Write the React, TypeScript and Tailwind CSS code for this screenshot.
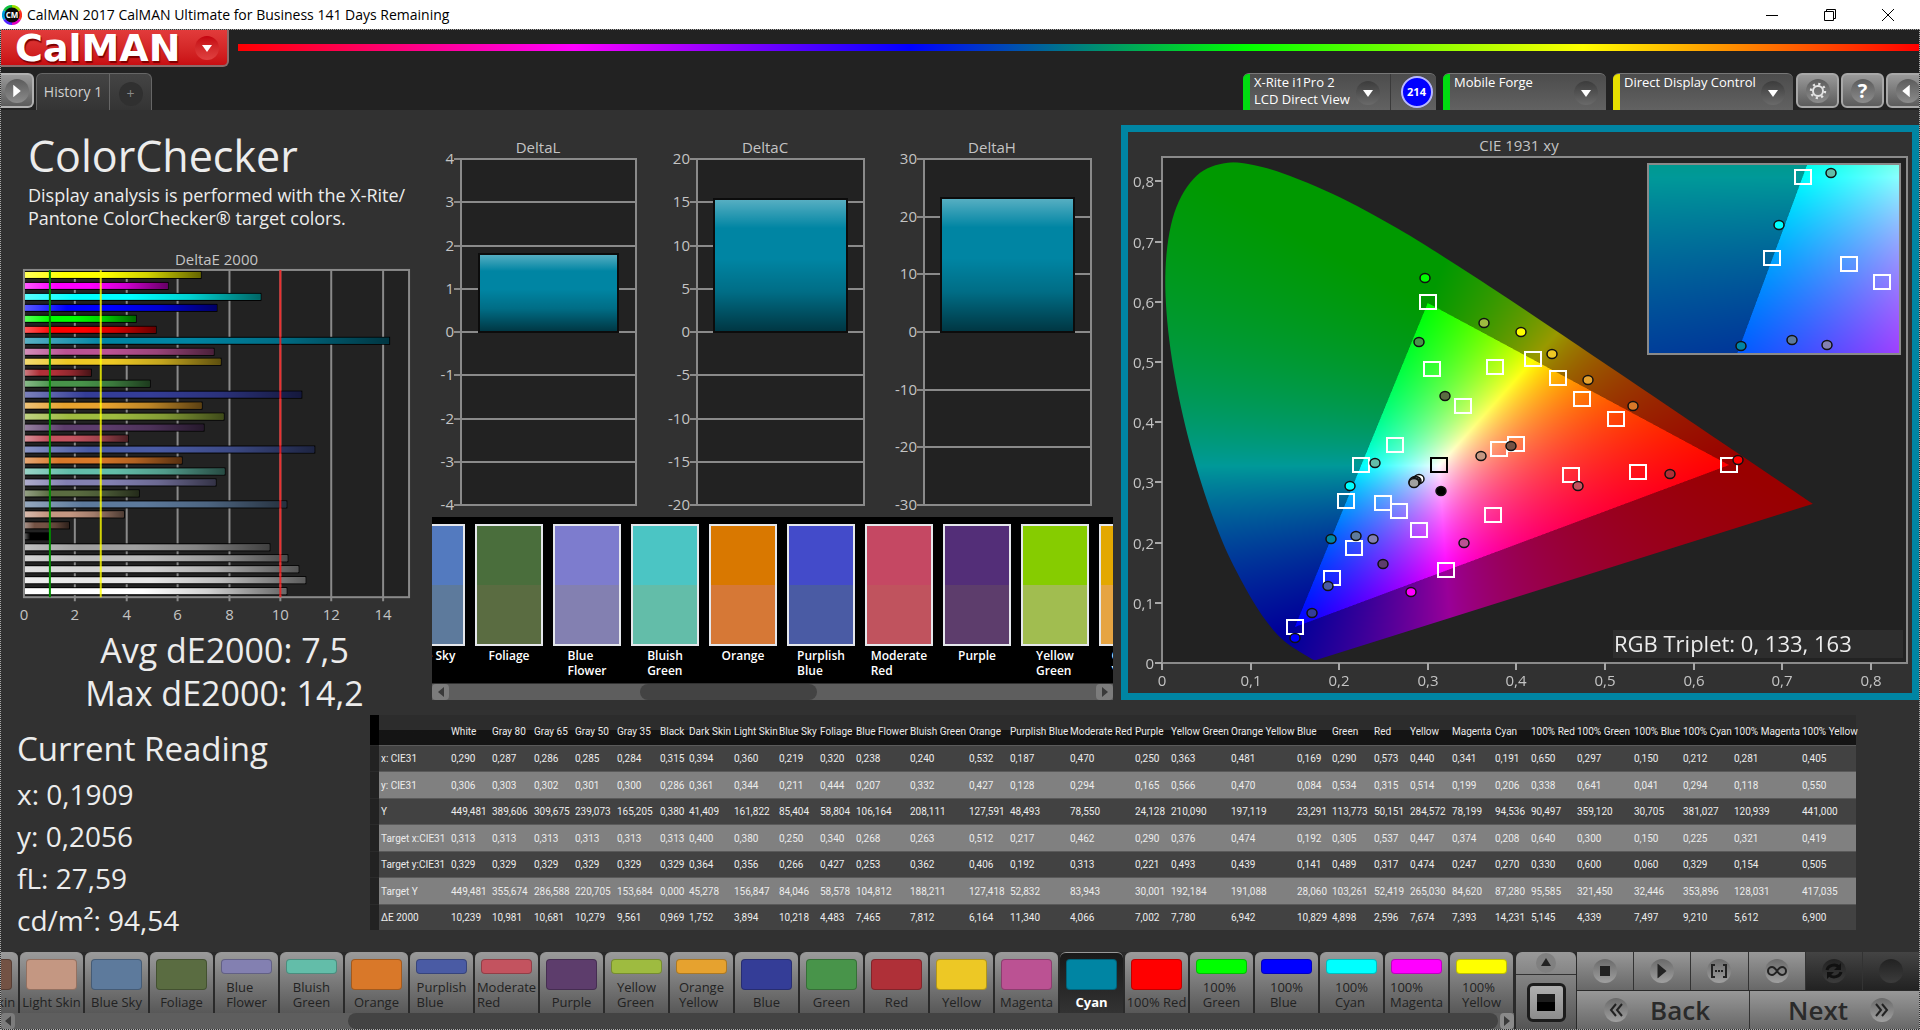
import { useEffect, useRef } from "react";
import type { ReactNode } from "react";
import clsx from "clsx";

interface Patch {
    name: string;
    color: string;
    // x, y, Y, target x, target y, target Y, dE2000
    values: string[];
    col: number;
}

const patches: Patch[] = [
    { name: "White", color: "#ffffff", col: 41, values: ["0,290", "0,306", "449,481", "0,313", "0,329", "449,481", "10,239"] },
    { name: "Gray 80", color: "#e6e6e6", col: 42, values: ["0,287", "0,303", "389,606", "0,313", "0,329", "355,674", "10,981"] },
    { name: "Gray 65", color: "#d2d2d2", col: 41, values: ["0,286", "0,302", "309,675", "0,313", "0,329", "286,588", "10,681"] },
    { name: "Gray 50", color: "#bcbcbc", col: 42, values: ["0,285", "0,301", "239,073", "0,313", "0,329", "220,705", "10,279"] },
    { name: "Gray 35", color: "#a0a0a0", col: 43, values: ["0,284", "0,300", "165,205", "0,313", "0,329", "153,684", "9,561"] },
    { name: "Black", color: "#000000", col: 29, values: ["0,315", "0,286", "0,380", "0,313", "0,329", "0,000", "0,969"] },
    { name: "Dark Skin", color: "#735244", col: 45, values: ["0,394", "0,361", "41,409", "0,400", "0,364", "45,278", "1,752"] },
    { name: "Light Skin", color: "#c49782", col: 45, values: ["0,360", "0,344", "161,822", "0,380", "0,356", "156,847", "3,894"] },
    { name: "Blue Sky", color: "#5d7a9c", col: 41, values: ["0,219", "0,211", "85,404", "0,250", "0,266", "84,046", "10,218"] },
    { name: "Foliage", color: "#5a6c41", col: 36, values: ["0,320", "0,444", "58,804", "0,340", "0,427", "58,578", "4,483"] },
    { name: "Blue Flower", color: "#8380b1", col: 54, values: ["0,238", "0,207", "106,164", "0,268", "0,253", "104,812", "7,465"] },
    { name: "Bluish Green", color: "#63bda9", col: 59, values: ["0,240", "0,332", "208,111", "0,263", "0,362", "188,211", "7,812"] },
    { name: "Orange", color: "#d97829", col: 41, values: ["0,532", "0,427", "127,591", "0,512", "0,406", "127,418", "6,164"] },
    { name: "Purplish Blue", color: "#4a5ba4", col: 60, values: ["0,187", "0,128", "48,493", "0,217", "0,192", "52,832", "11,340"] },
    { name: "Moderate Red", color: "#c3535f", col: 65, values: ["0,470", "0,294", "78,550", "0,462", "0,313", "83,943", "4,066"] },
    { name: "Purple", color: "#5d3d6c", col: 36, values: ["0,250", "0,165", "24,128", "0,290", "0,221", "30,001", "7,002"] },
    { name: "Yellow Green", color: "#9ebb40", col: 60, values: ["0,363", "0,566", "210,090", "0,376", "0,493", "192,184", "7,780"] },
    { name: "Orange Yellow", color: "#e6a22f", col: 66, values: ["0,481", "0,470", "197,119", "0,474", "0,439", "191,088", "6,942"] },
    { name: "Blue", color: "#343d97", col: 35, values: ["0,169", "0,084", "23,291", "0,192", "0,141", "28,060", "10,829"] },
    { name: "Green", color: "#48944a", col: 42, values: ["0,290", "0,534", "113,773", "0,305", "0,489", "103,261", "4,898"] },
    { name: "Red", color: "#af3038", col: 36, values: ["0,573", "0,315", "50,151", "0,537", "0,317", "52,419", "2,596"] },
    { name: "Yellow", color: "#edc825", col: 42, values: ["0,440", "0,514", "284,572", "0,447", "0,474", "265,030", "7,674"] },
    { name: "Magenta", color: "#bb5293", col: 43, values: ["0,341", "0,199", "78,199", "0,374", "0,247", "84,620", "7,393"] },
    { name: "Cyan", color: "#0085a3", col: 36, values: ["0,191", "0,206", "94,536", "0,208", "0,270", "87,280", "14,231"] },
    { name: "100% Red", color: "#ff0000", col: 46, values: ["0,650", "0,338", "90,497", "0,640", "0,330", "95,585", "5,145"] },
    { name: "100% Green", color: "#00ff00", col: 57, values: ["0,297", "0,641", "359,120", "0,300", "0,600", "321,450", "4,339"] },
    { name: "100% Blue", color: "#0000ff", col: 49, values: ["0,150", "0,041", "30,705", "0,150", "0,060", "32,446", "7,497"] },
    { name: "100% Cyan", color: "#00ffff", col: 51, values: ["0,212", "0,294", "381,027", "0,225", "0,329", "353,896", "9,210"] },
    { name: "100% Magenta", color: "#ff00ff", col: 68, values: ["0,281", "0,118", "120,939", "0,321", "0,154", "128,031", "5,612"] },
    { name: "100% Yellow", color: "#ffff00", col: 56, values: ["0,405", "0,550", "441,000", "0,419", "0,505", "417,035", "6,900"] },
];

const rowLabels = ["x: CIE31", "y: CIE31", "Y", "Target x:CIE31", "Target y:CIE31", "Target Y", "ΔE 2000"];

const swatches = [
    { name: "Blue Sky", top: "#537abf", bottom: "#5d7a9c", wrap: false },
    { name: "Foliage", top: "#4a6e3c", bottom: "#5a6c41", wrap: false },
    { name: "Blue Flower", top: "#7d7cce", bottom: "#8380b1", wrap: true },
    { name: "Bluish Green", top: "#4bc5c4", bottom: "#63bda9", wrap: true },
    { name: "Orange", top: "#d97800", bottom: "#d67836", wrap: false },
    { name: "Purplish Blue", top: "#434bca", bottom: "#4a5ba4", wrap: true },
    { name: "Moderate Red", top: "#c54863", bottom: "#c0535e", wrap: true },
    { name: "Purple", top: "#532e78", bottom: "#5d3d6c", wrap: false },
    { name: "Yellow Green", top: "#86cc00", bottom: "#a1bd50", wrap: true },
    { name: "Orange Yellow", top: "#e3a800", bottom: "#e6a442", wrap: true },
];

const wrapped = [
    "Blue Flower", "Bluish Green", "Purplish Blue", "Moderate Red", "Yellow Green", "Orange Yellow",
    "100% Green", "100% Blue", "100% Cyan", "100% Magenta", "100% Yellow",
];

const toNumber = (s: string) => parseFloat(s.replace(",", "."));

// Spectral locus, 380nm to 700nm
const locus = [
    [0.1741, 0.005], [0.1714, 0.0051], [0.1689, 0.0069], [0.1644, 0.0109], [0.1566, 0.0177],
    [0.144, 0.0297], [0.1355, 0.0399], [0.1241, 0.0578], [0.1096, 0.0868], [0.0913, 0.1327],
    [0.0687, 0.2007], [0.0454, 0.295], [0.0235, 0.4127], [0.0082, 0.5384], [0.0039, 0.6548],
    [0.0139, 0.7502], [0.0389, 0.812], [0.0743, 0.8338], [0.1142, 0.8262], [0.1547, 0.8059],
    [0.1929, 0.7816], [0.2296, 0.7543], [0.2658, 0.7243], [0.3016, 0.6923], [0.3731, 0.6245],
    [0.4441, 0.5547], [0.5125, 0.4866], [0.5752, 0.4242], [0.627, 0.3725], [0.6658, 0.334],
    [0.6915, 0.3083], [0.719, 0.2809], [0.7347, 0.2653],
];

interface View {
    x0: number;
    x1: number;
    y0: number;
    y1: number;
}

const mainView: View = { x0: 0, x1: 0.841, y0: 0, y1: 0.8417 };
const zoomView: View = { x0: 0.1405, x1: 0.2778, y0: 0.2005, y1: 0.3385 };

function GamutField({ view, width, height }: { view: View; width: number; height: number }) {
    const ref = useRef<HTMLCanvasElement>(null);

    useEffect(() => {
        const canvas = ref.current;
        const ctx = canvas?.getContext("2d");
        if (!canvas || !ctx) return;

        const w = canvas.width;
        const h = canvas.height;
        const image = ctx.createImageData(w, h);
        for (let j = 0; j < h; j++) {
            const y = view.y1 - ((j + 0.5) / h) * (view.y1 - view.y0);
            for (let i = 0; i < w; i++) {
                const x = view.x0 + ((i + 0.5) / w) * (view.x1 - view.x0);
                const X = x / y;
                const Z = (1 - x - y) / y;
                const rgb = [
                    3.2406 * X - 1.5372 - 0.4986 * Z,
                    -0.9689 * X + 1.8758 + 0.0415 * Z,
                    0.0557 * X - 0.204 + 1.057 * Z,
                ];
                // Outside the Rec.709 triangle the colors are dimmed
                const level = Math.min(...rgb) < 0 ? 153 : 255;
                const max = Math.max(...rgb);
                const at = (j * w + i) * 4;
                for (let k = 0; k < 3; k++) {
                    image.data[at + k] = (Math.max(0, rgb[k]) / max) * level;
                }
                image.data[at + 3] = 255;
            }
        }
        ctx.putImageData(image, 0, 0);

        const pts = locus.map(([x, y]) => [
            ((x - view.x0) / (view.x1 - view.x0)) * w,
            ((view.y1 - y) / (view.y1 - view.y0)) * h,
        ]);
        ctx.globalCompositeOperation = "destination-in";
        ctx.beginPath();
        ctx.moveTo(pts[0][0], pts[0][1]);
        for (let i = 0; i < pts.length - 1; i++) {
            const a = pts[Math.max(0, i - 1)];
            const b = pts[i];
            const c = pts[i + 1];
            const d = pts[Math.min(pts.length - 1, i + 2)];
            ctx.bezierCurveTo(
                b[0] + (c[0] - a[0]) / 6, b[1] + (c[1] - a[1]) / 6,
                c[0] - (d[0] - b[0]) / 6, c[1] - (d[1] - b[1]) / 6,
                c[0], c[1],
            );
        }
        ctx.closePath();
        ctx.fill();
    }, [view]);

    return <canvas ref={ref} width={width * 2} height={height * 2} className="block h-full w-full" />;
}

function Markers({ view, left, top, width, height }: { view: View; left: number; top: number; width: number; height: number }) {
    const px = (x: number) => Math.round(left + ((x - view.x0) / (view.x1 - view.x0)) * width);
    const py = (y: number) => Math.round(top + ((view.y1 - y) / (view.y1 - view.y0)) * height);
    const inside = (x: number, y: number) => x > view.x0 && x < view.x1 - 0.004 && y > view.y0 && y < view.y1;
    const targets = patches.filter((p) => inside(toNumber(p.values[3]), toNumber(p.values[4])));
    const measured = patches.filter((p) => inside(toNumber(p.values[0]), toNumber(p.values[1])));

    return (
        <g>
            {targets.map((p, i) => (
                <rect
                    key={p.name}
                    x={px(toNumber(p.values[3])) - 8}
                    y={py(toNumber(p.values[4])) - 7}
                    width="16"
                    height="14"
                    fill="none"
                    stroke={view === mainView && i < 6 ? "#000" : "#fff"}
                    strokeWidth="2"
                />
            ))}
            {measured.map((p) => (
                <ellipse
                    key={p.name}
                    cx={px(toNumber(p.values[0]))}
                    cy={py(toNumber(p.values[1]))}
                    rx="5"
                    ry="4.5"
                    fill={p.color}
                    stroke="#111"
                    strokeWidth="1.5"
                />
            ))}
        </g>
    );
}

function CieChart() {
    const ticks = [0, 1, 2, 3, 4, 5, 6, 7, 8];
    const label = (t: number) => (t === 0 ? "0" : `0,${t}`);

    return (
        <svg viewBox="0 0 784 561" className="block w-full" fontSize="15" fill="#c4c4c4">
            <text x="391" y="19" textAnchor="middle">CIE 1931 xy</text>
            <rect x="34" y="25" width="745" height="506" fill="#222222" stroke="#8a8a8a" strokeWidth="2" />
            <foreignObject x="34" y="26" width="745" height="505">
                <GamutField view={mainView} width={745} height={505} />
            </foreignObject>
            {ticks.map((t) => (
                <g key={t}>
                    <path d={`M${Math.round(34 + t * 88.6)} 531v7M27 ${Math.round(531 - t * 60.2)}h7`} stroke="#a8a8a8" strokeWidth="2" />
                    <text x={Math.round(34 + t * 88.6)} y="554" textAnchor="middle">{label(t)}</text>
                    <text x="26" y={Math.round(537 - t * 60.2)} textAnchor="end">{label(t)}</text>
                </g>
            ))}
            <Markers view={mainView} left={34} top={25} width={745} height={506} />

            {/* Zoomed view around the selected patch */}
            <foreignObject x="520" y="32" width="252" height="190">
                <GamutField view={zoomView} width={252} height={190} />
            </foreignObject>
            <rect x="520" y="32" width="252" height="190" fill="none" stroke="#8a8a8a" strokeWidth="2" />
            <Markers view={zoomView} left={520} top={32} width={252} height={190} />

            <rect x="485" y="498" width="290" height="28" fill="#2d2d2d" />
            <text x="486" y="520" fontSize="22" fill="#ececec">RGB Triplet: 0, 133, 163</text>
        </svg>
    );
}

function GlossStops() {
    return (
        <>
            <stop offset="0" stopColor="#fff" stopOpacity="0.35" />
            <stop offset="0.22" stopColor="#fff" stopOpacity="0" />
            <stop offset="0.45" stopColor="#000" stopOpacity="0" />
            <stop offset="0.7" stopColor="#000" stopOpacity="0.18" />
            <stop offset="1" stopColor="#000" stopOpacity="0.6" />
        </>
    );
}

function DeltaEChart() {
    const unit = 25.7;
    const bars = [...patches].reverse();

    return (
        <svg viewBox="1 0 432 376" className="block w-full" fontSize="15" fill="#c4c4c4">
            <defs>
                <linearGradient id="gloss-x" x1="0" y1="0" x2="1" y2="0">
                    <GlossStops />
                </linearGradient>
            </defs>
            <text x="217" y="15" textAnchor="middle">DeltaE 2000</text>
            <rect x="24" y="20" width="386" height="328" fill="#222222" />
            {[2, 4, 6, 8, 10, 12, 14].map((t) => (
                <path key={t} d={`M${Math.round(24 + t * unit)} 20v332`} stroke="#8a8a8a" strokeWidth="2" />
            ))}
            <rect x="24" y="20" width="386" height="328" fill="none" stroke="#8a8a8a" strokeWidth="2" />
            {bars.map((p, i) => {
                const y = Math.round(21 + i * 10.93);
                const w = Math.round(toNumber(p.values[6]) * unit);
                return (
                    <g key={p.name}>
                        <rect x="25" y={y} width={w} height="8" fill="#000" />
                        <rect x="25" y={y + 1} width={w - 1} height="6" fill={p.color} />
                        <rect x="25" y={y + 1} width={w - 1} height="6" fill="url(#gloss-x)" />
                    </g>
                );
            })}
            <path d="M50 20v328" stroke="#008a00" strokeWidth="2" />
            <path d="M101 20v328" stroke="#ffff00" strokeOpacity="0.8" strokeWidth="2" />
            <path d="M281 20v328" stroke="#ff1a1a" strokeOpacity="0.8" strokeWidth="2" />
            {[0, 2, 4, 6, 8, 10, 12, 14].map((t) => (
                <text key={t} x={Math.round(24 + t * unit)} y="371" textAnchor="middle">{t}</text>
            ))}
        </svg>
    );
}

interface DeltaProps {
    title: string;
    value: number;
    limit: number;
    step: number;
    left: number;
    right: number;
}

function DeltaChart({ title, value, limit, step, left, right }: DeltaProps) {
    const ticks: number[] = [];
    for (let t = -limit; t <= limit; t += step) ticks.push(t);
    const y = (t: number) => Math.round(194 - (t / limit) * 173);
    const inset = Math.round((right - left) / 10);

    return (
        <svg viewBox="0 0 227 379" className="block min-w-0 flex-1" fontSize="15" fill="#c4c4c4">
            <defs>
                <linearGradient id={`gloss-${title}`} x1="0" y1="0" x2="0" y2="1">
                    <GlossStops />
                </linearGradient>
            </defs>
            <text x="106" y="15" textAnchor="middle">{title}</text>
            <rect x={left} y="21" width={right - left} height="346" fill="#222222" />
            {ticks.map((t) => (
                <g key={t}>
                    <path d={`M${left - 7} ${y(t)}H${right}`} stroke="#8a8a8a" strokeWidth="2" />
                    <text x={left - 7} y={y(t) + 5} textAnchor="end">{t}</text>
                </g>
            ))}
            <rect x={left} y="21" width={right - left} height="346" fill="none" stroke="#8a8a8a" strokeWidth="2" />
            <rect
                x={left + inset}
                y={y(value)}
                width={right - left - 2 * inset}
                height={194 - y(value)}
                fill="#0085a3"
            />
            <rect
                x={left + inset}
                y={y(value)}
                width={right - left - 2 * inset}
                height={194 - y(value)}
                fill={`url(#gloss-${title})`}
                stroke="#0c0c0c"
                strokeWidth="2"
            />
        </svg>
    );
}

function Triangle({ className, dir }: { className?: string; dir: "up" | "down" | "left" | "right" }) {
    const d = { up: "M0 8L5 0l5 8z", down: "M0 2h10L5 9z", left: "M8 0v10L2 5z", right: "M2 0v10l6-5z" }[dir];
    return (
        <svg viewBox="0 0 10 10" className={clsx("h-[10px] w-[10px] fill-current", className)}>
            <path d={d} />
        </svg>
    );
}

function SwatchStrip() {
    return (
        <div className="mr-2">
            <div className="flex h-[166px] gap-[10px] overflow-hidden bg-black pt-[7px]">
                {swatches.map((s) => (
                    <div key={s.name} className="w-[68px] shrink-0 first:-ml-[35px]">
                        <div className="flex h-[122px] flex-col border-2 border-gray-200">
                            <div className="flex-1" style={{ backgroundColor: s.top }} />
                            <div className="flex-1" style={{ backgroundColor: s.bottom }} />
                        </div>
                        <p className={clsx("mx-auto mt-[2px] text-xs leading-[15px] font-semibold text-white", s.wrap ? "w-min" : "w-max")}>
                            {s.name}
                        </p>
                    </div>
                ))}
            </div>
            <div className="mt-px flex h-4 items-stretch justify-between bg-[#5e5e5e]">
                <button aria-label="Scroll left" className="flex w-[17px] items-center justify-center rounded bg-[#7c7c7c] text-[#3a3a3a]">
                    <Triangle dir="left" />
                </button>
                <div className="flex flex-1 pl-[28%] pr-[41%]">
                    <div className="flex-1 rounded-lg bg-[#434343]" />
                </div>
                <button aria-label="Scroll right" className="flex w-[17px] items-center justify-center rounded bg-[#7c7c7c] text-[#3a3a3a]">
                    <Triangle dir="right" />
                </button>
            </div>
        </div>
    );
}

function ResultsTable() {
    return (
        <table className="h-[215px] w-full table-fixed border-collapse text-left font-[Roboto,sans-serif] text-[10px] leading-4 whitespace-nowrap text-[#ececec]">
            <colgroup>
                <col className="w-[9px]" />
                <col className="w-[70px]" />
                {patches.map((p) => (
                    <col key={p.name} style={{ width: p.col }} />
                ))}
            </colgroup>
            <thead>
                <tr className="h-[30px] bg-linear-to-b from-[#2c2c2c] from-50% to-[#141414] to-50%">
                    <td className="bg-black" />
                    <td />
                    {patches.map((p) => (
                        <th key={p.name} scope="col" className="p-0 pt-1 pl-[2px] font-normal">{p.name}</th>
                    ))}
                </tr>
            </thead>
            <tbody>
                {rowLabels.map((label, r) => (
                    <tr key={label} className="border-t border-[#5a5a5a] odd:bg-[#424242] even:bg-[#808080]">
                        <td className="border-t border-[#2a2a2a] bg-[#222222]" />
                        <th scope="row" className="p-0 pt-[2px] pl-[2px] font-normal">{label}</th>
                        {patches.map((p) => (
                            <td key={p.name} className="p-0 pt-[2px] pl-[2px]">{p.values[r]}</td>
                        ))}
                    </tr>
                ))}
            </tbody>
        </table>
    );
}

function SourceBox({ lines, strip, className, children }: { lines: string[]; strip: string; className: string; children?: ReactNode }) {
    return (
        <div className={clsx("flex h-[37px] overflow-hidden rounded-t-md border-t border-[#777] bg-linear-to-b from-[#4c4c4c] to-[#626262]", className)}>
            <div className={clsx("w-[7px]", strip)} />
            <button className="flex flex-1 justify-between pr-2 pl-1 text-left text-[13px] leading-[17px] whitespace-nowrap text-white">
                <span>
                    {lines.map((l) => (
                        <span key={l} className="block">{l}</span>
                    ))}
                </span>
                <span className="mt-[7px] flex h-6 w-6 items-center justify-center rounded-full bg-linear-to-b from-[#3c3c3c] to-[#6a6a6a]">
                    <Triangle dir="down" />
                </span>
            </button>
            {children}
        </div>
    );
}

function ToolButton({ label, children }: { label: string; children: ReactNode }) {
    return (
        <button
            aria-label={label}
            className="flex h-[35px] w-[43px] items-center justify-center rounded-md border-2 border-[#a8a8a8] bg-linear-to-b from-[#9a9a9a] to-[#5c5c5c] text-white"
        >
            <span className="flex h-6 w-6 items-center justify-center rounded-full bg-linear-to-b from-[#5c5c5c] to-[#8c8c8c]">
                {children}
            </span>
        </button>
    );
}

function Header() {
    return (
        <header className="bg-[#222222]">
            <div className="flex items-start">
                <button className="flex h-[37px] w-[228px] items-center justify-between rounded-br-md border-r-2 border-b-2 border-[#8d6a6a] bg-linear-to-b from-[#e23b3b] to-[#c90d12] pr-2 pl-[14px] text-white">
                    <span className="font-['DejaVu_Sans',sans-serif] text-[38px] leading-[34px] font-bold [text-shadow:1px_2px_1px_#7a0000]">CalMAN</span>
                    <span className="flex h-6 w-6 items-center justify-center rounded-full bg-linear-to-b from-[#c4000e] to-[#e04040]">
                        <Triangle dir="down" />
                    </span>
                </button>
                <div className="mt-[14px] ml-[9px] h-[7px] flex-1 bg-[linear-gradient(to_right,#f00,#f0f,#00f,#0f0,#ff0,#f00)]" />
            </div>
            <div className="mt-[6px] flex items-start justify-between">
                <div className="flex items-start">
                    <button aria-label="Show panel" className="flex h-[35px] w-[33px] items-center justify-center rounded-r-md border-2 border-l-0 border-[#b0b0b0] bg-linear-to-b from-[#9a9a9a] to-[#5c5c5c] text-white">
                        <span className="flex h-6 w-6 items-center justify-center rounded-full bg-linear-to-b from-[#5c5c5c] to-[#8c8c8c]">
                            <Triangle dir="right" className="scale-125" />
                        </span>
                    </button>
                    <nav className="ml-[2px] flex h-[37px] rounded-t-md border border-b-0 border-[#666] bg-linear-to-b from-[#444] to-[#343434] text-sm text-[#d0d0d0]">
                        <button className="w-[73px] border-r border-[#666]">History 1</button>
                        <button aria-label="Add tab" className="flex w-[41px] items-center justify-center">
                            <span className="mt-1 flex h-6 w-6 items-center justify-center rounded-full bg-[#303030] text-[#888]">+</span>
                        </button>
                    </nav>
                </div>
                <div className="flex items-start overflow-hidden">
                    <SourceBox lines={["X-Rite i1Pro 2", "LCD Direct View"]} strip="bg-[#00dd10]" className="w-[193px]">
                        <div className="ml-[2px] flex w-[44px] items-center justify-center border-l border-[#3a3a3a] pl-2">
                            <span className="flex h-8 w-8 shrink-0 items-center justify-center rounded-full border-2 border-[#b8b8ff] bg-[#0000ff] text-[11px] font-bold text-white">214</span>
                        </div>
                        <div className="w-[2px]" />
                    </SourceBox>
                    <SourceBox lines={["Mobile Forge"]} strip="bg-[#00dd10]" className="ml-[7px] w-[163px]" />
                    <SourceBox lines={["Direct Display Control"]} strip="bg-[#e8e000]" className="mr-[3px] ml-[7px] w-[180px]" />
                    <div className="-mr-[10px] flex gap-[2px]">
                        <ToolButton label="Settings">
                            <svg viewBox="0 0 20 20" className="h-5 w-5" fill="none" stroke="#e4e4e4">
                                <circle cx="10" cy="10" r="5" strokeWidth="2" />
                                <circle cx="10" cy="10" r="7" strokeWidth="2.4" strokeDasharray="2.2 3.3" />
                            </svg>
                        </ToolButton>
                        <ToolButton label="Help">
                            <span className="text-xl font-bold">?</span>
                        </ToolButton>
                        <ToolButton label="Hide panel">
                            <Triangle dir="left" className="mr-1 scale-125" />
                        </ToolButton>
                    </div>
                </div>
            </div>
        </header>
    );
}

function PatchButton({ patch }: { patch: Patch }) {
    const two = wrapped.includes(patch.name);
    const active = patch.name === "Cyan";
    return (
        <button
            className={clsx(
                "flex h-[61px] w-[63px] shrink-0 flex-col items-center rounded-t-md border-t border-[#999] bg-linear-to-b pt-[6px] text-[13px] leading-[15px]",
                active ? "from-[#191919] to-[#333] font-bold text-white" : "from-[#9a9a9a] to-[#585858] text-[#222]",
            )}
        >
            <span
                className={clsx("w-[51px] rounded border border-black/25", two ? "h-[15px]" : "h-[31px]")}
                style={{ backgroundColor: patch.color }}
            />
            <span className={clsx("mt-auto mb-[3px] text-left", two ? "w-min" : "w-max")}>{patch.name}</span>
        </button>
    );
}

function RoundIcon({ dim, children }: { dim?: boolean; children?: ReactNode }) {
    return (
        <span
            className={clsx(
                "flex h-6 w-6 items-center justify-center rounded-full bg-linear-to-b",
                dim ? "from-[#222] to-[#3c3c3c]" : "from-[#6a6a6a] to-[#a0a0a0]",
            )}
        >
            {children}
        </span>
    );
}

function TransportButton({ label, dim, children }: { label: string; dim?: boolean; children?: ReactNode }) {
    return (
        <button
            aria-label={label}
            className={clsx(
                "flex flex-1 items-center justify-center border-r border-[#333] bg-linear-to-b text-[#222] last:border-r-0",
                dim ? "from-[#444] to-[#222]" : "from-[#989898] to-[#686868]",
            )}
        >
            <RoundIcon dim={dim}>{children}</RoundIcon>
        </button>
    );
}

function Chevrons({ flip }: { flip?: boolean }) {
    return (
        <svg viewBox="0 0 16 16" className={clsx("h-4 w-4", flip && "rotate-180")} fill="none" stroke="#222" strokeWidth="2">
            <path d="M8 2L3 8l5 6M14 2L9 8l5 6" />
        </svg>
    );
}

function Footer() {
    return (
        <footer className="flex h-[77px] bg-[#2a2a2a]">
            <div className="flex min-w-0 flex-1 flex-col">
                <div className="flex justify-end gap-[2px] overflow-hidden pr-px">
                    {patches.slice(6).map((p) => (
                        <PatchButton key={p.name} patch={p} />
                    ))}
                </div>
                <div className="flex flex-1 bg-[#5e5e5e]">
                    <button aria-label="Scroll left" className="flex w-[14px] items-center justify-center rounded bg-[#7c7c7c] text-[#3a3a3a]">
                        <Triangle dir="left" />
                    </button>
                    <div className="flex flex-1 pr-[2px] pl-[22%]">
                        <div className="flex-1 rounded-lg bg-[#434343]" />
                    </div>
                    <button aria-label="Scroll right" className="flex w-[14px] items-center justify-center rounded bg-[#8a8a8a] text-[#3a3a3a]">
                        <Triangle dir="right" />
                    </button>
                </div>
            </div>
            <div className="ml-[2px] flex w-[60px] flex-col rounded-t-md bg-linear-to-b from-[#999] to-[#555]">
                <button aria-label="Expand" className="flex h-[23px] items-center justify-center border-b border-[#333] text-[#222]">
                    <span className="flex h-5 w-5 items-center justify-center rounded-full bg-[#808080]">
                        <Triangle dir="up" />
                    </span>
                </button>
                <div className="flex flex-1 items-center justify-center">
                    <button aria-label="Pattern window" className="flex h-[39px] w-[39px] items-center justify-center rounded-md border-3 border-[#1c1c1c] bg-linear-to-b from-[#b0b0b0] to-[#8c8c8c]">
                        <span className="h-[17px] w-[18px] bg-linear-to-b from-[#1c1c1c] from-50% to-black to-50%" />
                    </button>
                </div>
            </div>
            <div className="ml-px flex w-[342px] flex-col gap-px">
                <div className="flex h-[38px]">
                    <TransportButton label="Stop">
                        <span className="h-[10px] w-[10px] bg-[#222]" />
                    </TransportButton>
                    <TransportButton label="Play">
                        <Triangle dir="right" className="scale-150" />
                    </TransportButton>
                    <TransportButton label="Read series">
                        <svg viewBox="0 0 18 16" className="h-4 w-[18px]" fill="none" stroke="#222" strokeWidth="2">
                            <path d="M5 2H2v12h3M13 2h3v12h-3" />
                            <path d="M5 8h8" strokeDasharray="2 1" />
                        </svg>
                    </TransportButton>
                    <TransportButton label="Read continuously">
                        <svg viewBox="0 0 20 12" className="h-3 w-5" fill="none" stroke="#222" strokeWidth="2">
                            <path d="M10 6C8 3 7 2 5 2a4 4 0 0 0 0 8c2 0 3-1 5-4s3-4 5-4a4 4 0 0 1 0 8c-2 0-3-1-5-4z" />
                        </svg>
                    </TransportButton>
                    <TransportButton label="Refresh" dim>
                        <svg viewBox="0 0 20 20" className="h-5 w-5" fill="none" stroke="#111" strokeWidth="3">
                            <path d="M3 9a7 6 0 0 1 12-3M17 11a7 6 0 0 1-12 3" />
                            <path d="M17 2v7h-7zM3 18v-7h7z" fill="#111" stroke="none" />
                        </svg>
                    </TransportButton>
                    <TransportButton label="Record" dim />
                </div>
                <div className="flex flex-1 text-[26px] leading-[30px] font-semibold text-[#2a2a2a]">
                    <button className="flex flex-1 items-center gap-[22px] border-r border-[#333] bg-linear-to-b from-[#989898] to-[#686868] pl-[27px]">
                        <RoundIcon><Chevrons /></RoundIcon>
                        Back
                    </button>
                    <button className="flex flex-1 items-center justify-end gap-[22px] bg-linear-to-b from-[#989898] to-[#686868] pr-[25px]">
                        Next
                        <RoundIcon><Chevrons flip /></RoundIcon>
                    </button>
                </div>
            </div>
        </footer>
    );
}

function TitleBar() {
    return (
        <div className="flex h-[29px] items-center bg-white pr-[3px] pl-[2px] text-black">
            <svg viewBox="0 0 20 20" className="h-5 w-5">
                <path d="M10 0a10 10 0 0 1 8.7 5L10 10z" fill="#9be000" />
                <path d="M18.7 5a10 10 0 0 1 0 10L10 10z" fill="#ff3020" />
                <path d="M18.7 15A10 10 0 0 1 10 20V10z" fill="#e000c0" />
                <path d="M10 20a10 10 0 0 1-8.7-5L10 10z" fill="#5020ff" />
                <path d="M1.3 15a10 10 0 0 1 0-10L10 10z" fill="#00a0e0" />
                <path d="M1.3 5A10 10 0 0 1 10 0v10z" fill="#10c040" />
                <circle cx="10" cy="10" r="7.5" fill="#0a0a0a" />
                <text x="10" y="13" textAnchor="middle" fontSize="8" fontWeight="700" fill="#fff">CM</text>
            </svg>
            <h1 className="ml-[5px] flex-1 text-sm">CalMAN 2017 CalMAN Ultimate for Business 141 Days Remaining</h1>
            <button aria-label="Minimize" className="flex w-[58px] justify-center">
                <svg viewBox="0 0 12 12" className="h-3 w-3" stroke="#000"><path d="M0 6.5h12" /></svg>
            </button>
            <button aria-label="Restore" className="flex w-[58px] justify-center">
                <svg viewBox="0 0 12 12" className="h-3 w-3" fill="none" stroke="#000"><path d="M.5 2.5h9v9h-9zM2.5 2.5v-2h9v9h-2" /></svg>
            </button>
            <button aria-label="Close" className="flex w-[58px] justify-center">
                <svg viewBox="0 0 12 12" className="h-3 w-3" stroke="#000"><path d="M0 0l12 12M12 0L0 12" /></svg>
            </button>
        </div>
    );
}

export default function App() {
    return (
        <div className="flex min-h-screen flex-col bg-[#313131] font-['Open_Sans','Noto_Sans',sans-serif] text-[#ececec]">
            <TitleBar />
            <div className="flex flex-1 flex-col border border-dotted border-[#aaaaaa]">
                <Header />
                <main className="flex-1">
                    <div className="grid grid-cols-[minmax(0,431fr)_minmax(0,689fr)_minmax(0,798fr)]">
                        <section>
                            <h2 className="mt-[18px] ml-[27px] text-[43px] leading-[56px]">ColorChecker</h2>
                            <p className="ml-[27px] text-[18px] leading-[23px] whitespace-nowrap">
                                Display analysis is performed with the X-Rite/
                                <br />
                                Pantone ColorChecker® target colors.
                            </p>
                            <div className="mt-5">
                                <DeltaEChart />
                            </div>
                            <div className="mt-1 pl-4 text-center text-[34px] leading-[43px]">
                                <p>Avg dE2000: 7,5</p>
                                <p>Max dE2000: 14,2</p>
                            </div>
                        </section>
                        <section className="pt-7">
                            <div className="mr-2 flex">
                                <DeltaChart title="DeltaL" value={1.8} limit={4} step={1} left={29} right={204} />
                                <DeltaChart title="DeltaC" value={15.4} limit={20} step={5} left={38} right={205} />
                                <DeltaChart title="DeltaH" value={23.3} limit={30} step={10} left={38} right={205} />
                            </div>
                            <SwatchStrip />
                        </section>
                        <section className="pt-[15px]">
                            <div className="border-7 border-[#0085a3]">
                                <CieChart />
                            </div>
                        </section>
                    </div>
                    <div className="flex items-start">
                        <section className="w-[369px] shrink-0 pl-4">
                            <h2 className="mt-3 text-[33px] leading-[44px]">Current Reading</h2>
                            <div className="mt-[2px] text-[28px] leading-[42px]">
                                <p>x: 0,1909</p>
                                <p>y: 0,2056</p>
                                <p>fL: 27,59</p>
                                <p>cd/m²: 94,54</p>
                            </div>
                        </section>
                        <div className="mr-[63px] min-w-0 flex-1">
                            <ResultsTable />
                        </div>
                    </div>
                </main>
                <Footer />
            </div>
        </div>
    );
}
